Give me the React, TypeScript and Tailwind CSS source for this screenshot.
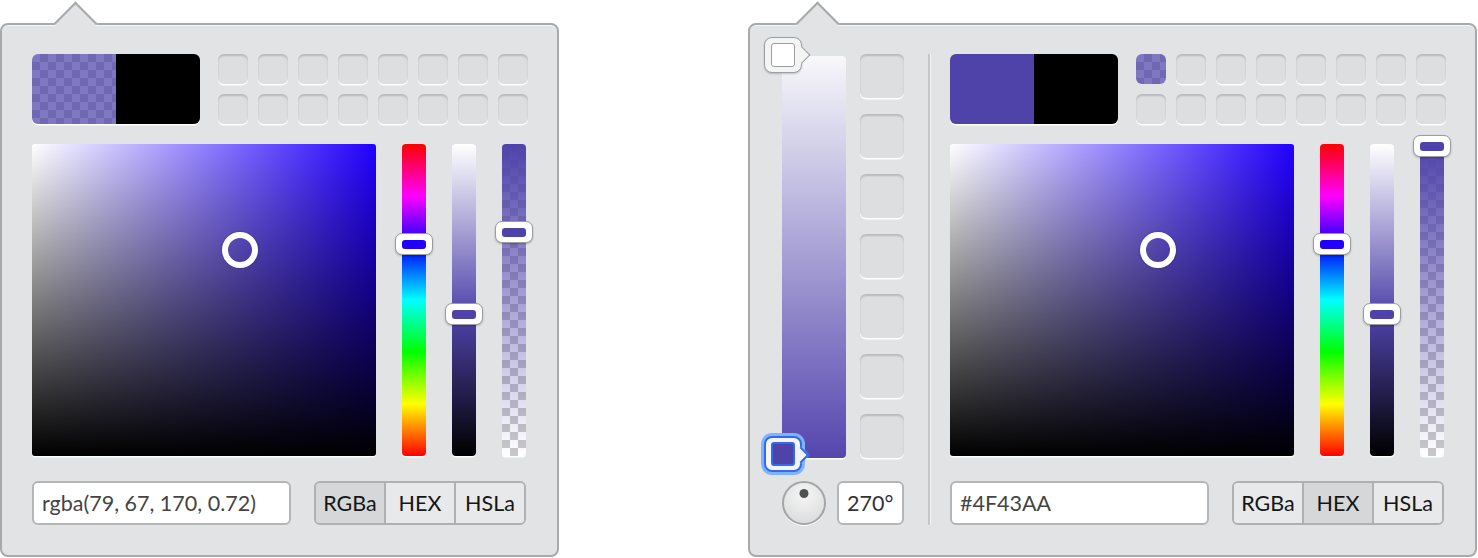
import React from "react";

// Two colour-picker popovers: a plain one, and one with a gradient-stop editor on its left.

const FONT = "font-['Lato','Noto_Sans',sans-serif]";

const WELL =
  "rounded-[6px] bg-[#dcdedf] shadow-[inset_0_2px_2px_rgba(0,0,0,0.16),0_1.5px_0_#ffffff]";

const CHECKER_PURPLE =
  "bg-[linear-gradient(rgba(79,67,170,0.72),rgba(79,67,170,0.72)),repeating-conic-gradient(#c8c8c8_0_25%,#ffffff_0_50%)] bg-[length:100%_100%,16px_16px]";

const HUE_TRACK = "bg-[linear-gradient(to_bottom,#ff0000,#ff00ff,#0000ff,#00ffff,#00ff00,#ffff00,#ff0000)]";
const LIGHT_TRACK = "bg-[linear-gradient(to_bottom,#ffffff,#4f43aa_55%,#000000)]";
const ALPHA_TRACK =
  "bg-[linear-gradient(to_bottom,#4f43aa,rgba(79,67,170,0)),repeating-conic-gradient(#c8c8c8_0_25%,#ffffff_0_50%)] bg-[length:100%_100%,16px_16px]";

interface PickerProps {
  previewLeft: string;
  firstSwatch?: string;
  alphaTop: string;
  value: string;
  mode: "RGBa" | "HEX" | "HSLa";
}

function Slider({ track, handleTop, pill }: { track: string; handleTop: string; pill: string }) {
  return (
    <div className={`relative h-[312px] w-[24px] rounded-[4px] shadow-[0_1.5px_0_#ffffff] ${track}`}>
      <div
        className={`absolute left-[-7px] ${handleTop} flex h-[22px] w-[38px] items-center justify-center rounded-[7px] border border-[#9a9c9d] bg-white shadow-[0_1px_2px_rgba(0,0,0,0.25)]`}
      >
        <div className={`h-[9px] w-[24px] rounded-[3px] ${pill}`} />
      </div>
    </div>
  );
}

function Picker({ previewLeft, firstSwatch, alphaTop, value, mode }: PickerProps) {
  return (
    <div className="flex flex-col">
      <div className="flex items-start gap-[18px]">
        <div className="flex h-[70px] w-[168px] overflow-hidden rounded-[6px] shadow-[0_1.5px_0_#ffffff]">
          <div className={`h-full w-1/2 ${previewLeft}`} />
          <div className="h-full w-1/2 bg-black" />
        </div>
        <div className="grid grid-cols-[repeat(8,30px)] gap-[10px]">
          {Array.from({ length: 16 }).map((_, i) => (
            <div
              key={i}
              className={`h-[30px] w-[30px] ${i === 0 && firstSwatch ? `rounded-[6px] ${firstSwatch}` : WELL}`}
            />
          ))}
        </div>
      </div>

      <div className="mt-[20px] flex gap-[26px]">
        <div className="relative h-[312px] w-[344px] rounded-[3px] bg-[linear-gradient(to_top,#000000,rgba(0,0,0,0)),linear-gradient(to_right,#ffffff,#2200ff)] shadow-[0_1.5px_0_#ffffff]">
          <div className="absolute left-[190px] top-[88px] h-[36px] w-[36px] rounded-full border-[6px] border-white shadow-[0_0_2px_rgba(0,0,0,0.35)]" />
        </div>
        <Slider track={HUE_TRACK} handleTop="top-[89px]" pill="bg-[#2200ff]" />
        <Slider track={LIGHT_TRACK} handleTop="top-[159px]" pill="bg-[#4f43aa]" />
        <Slider track={ALPHA_TRACK} handleTop={alphaTop} pill="bg-[#4f43aa]" />
      </div>

      <div className="mt-[25px] flex items-center gap-[23px]">
        <div className="flex h-[44px] w-[259px] items-center rounded-[6px] border-2 border-[#b4b6b7] bg-white pl-[8px] text-[21.5px] text-[#444]">
          {value}
        </div>
        <div className="flex h-[44px] w-[212px] overflow-hidden rounded-[6px] border-2 border-[#aeb0b1] text-[21.5px] text-[#151515]">
          {(["RGBa", "HEX", "HSLa"] as const).map((m, i) => (
            <div
              key={m}
              className={`flex flex-1 items-center justify-center ${i > 0 ? "border-l-2 border-[#aeb0b1]" : ""} ${
                m === mode ? "bg-[#d5d7d8]" : "bg-[#e8e9ea]"
              }`}
            >
              {m}
            </div>
          ))}
        </div>
      </div>
    </div>
  );
}

function Panel({ arrowLeft, children, className }: { arrowLeft: string; children: React.ReactNode; className: string }) {
  return (
    <div
      className={`relative h-[534px] rounded-[8px] border-2 border-[#a7a9aa] bg-[#e1e3e4] pl-[30px] pt-[29px] shadow-[inset_0_1px_0_#f4f5f5] ${className}`}
    >
      <div
        className={`absolute top-[-17.5px] ${arrowLeft} h-[31px] w-[31px] rotate-45 border-l-2 border-t-2 border-[#a7a9aa] bg-[#e1e3e4]`}
      />
      <div className="relative">{children}</div>
    </div>
  );
}

function StopMarker({ selected }: { selected?: boolean }) {
  return (
    <div
      className={`relative flex h-[36px] w-[38px] items-center justify-center rounded-[8px] bg-[#f4f4f4] ${
        selected
          ? "border-2 border-[#2f6bf0] shadow-[0_0_0_3px_#7fb2ff]"
          : "border border-[#9c9e9f] shadow-[0_1px_2px_rgba(0,0,0,0.2)]"
      }`}
    >
      <div
        className={`absolute right-[-7px] top-[11px] h-[12px] w-[12px] rotate-45 bg-[#f4f4f4] ${
          selected ? "border-r-2 border-t-2 border-[#2f6bf0]" : "border-r border-t border-[#9c9e9f]"
        }`}
      />
      <div
        className={`relative h-[24px] w-[24px] rounded-[3px] ${
          selected ? "border-2 border-[#2f6bf0] bg-[#4f43aa]" : "border border-[#9c9e9f] bg-white"
        }`}
      />
    </div>
  );
}

function GradientEditor() {
  return (
    <div className="ml-[2px] flex flex-col">
      <div className="flex items-start gap-[14px]">
        <div className="relative mt-[2px] h-[402px] w-[64px] rounded-[4px] bg-[linear-gradient(to_bottom,#f8f8fb,#5446ae)] shadow-[0_1.5px_0_#ffffff]">
          <div className="absolute left-[-18px] top-[-19px]">
            <StopMarker />
          </div>
          <div className="absolute bottom-[-14px] left-[-18px]">
            <StopMarker selected />
          </div>
        </div>
        <div className="flex flex-col gap-[16px]">
          {Array.from({ length: 7 }).map((_, i) => (
            <div key={i} className={`h-[44px] w-[44px] ${WELL}`} />
          ))}
        </div>
      </div>
      <div className="mt-[23px] flex items-center gap-[11px]">
        <div className="relative h-[44px] w-[44px] rounded-full border-2 border-[#a3a5a6] bg-[radial-gradient(circle_at_50%_30%,#f6f6f6,#d6d7d8)] shadow-[0_1px_0_#ffffff]">
          <div className="absolute left-1/2 top-[6px] h-[9px] w-[9px] -translate-x-1/2 rounded-full bg-[#505050]" />
        </div>
        <div className="flex h-[44px] w-[67px] items-center rounded-[6px] border-2 border-[#b4b6b7] bg-white pl-[8px] text-[21.5px] text-[#333]">
          270°
        </div>
      </div>
    </div>
  );
}

export default function App() {
  return (
    <div className={`flex w-[1478px] items-start pt-[23px] ${FONT}`}>
      <Panel arrowLeft="left-[58px]" className="w-[559px]">
        <Picker previewLeft={CHECKER_PURPLE} alphaTop="top-[77px]" value="rgba(79, 67, 170, 0.72)" mode="RGBa" />
      </Panel>
      <Panel arrowLeft="left-[52px]" className="ml-[189px] w-[729px]">
        <div className="flex">
          <GradientEditor />
          <div className="ml-[24px] mr-[20px] w-[2px] self-stretch bg-[#c4c6c7] shadow-[1px_0_0_#f4f5f5]" />
          <Picker
            previewLeft="bg-[#4f43aa]"
            firstSwatch={CHECKER_PURPLE}
            alphaTop="top-[-9px]"
            value="#4F43AA"
            mode="HEX"
          />
        </div>
      </Panel>
    </div>
  );
}
